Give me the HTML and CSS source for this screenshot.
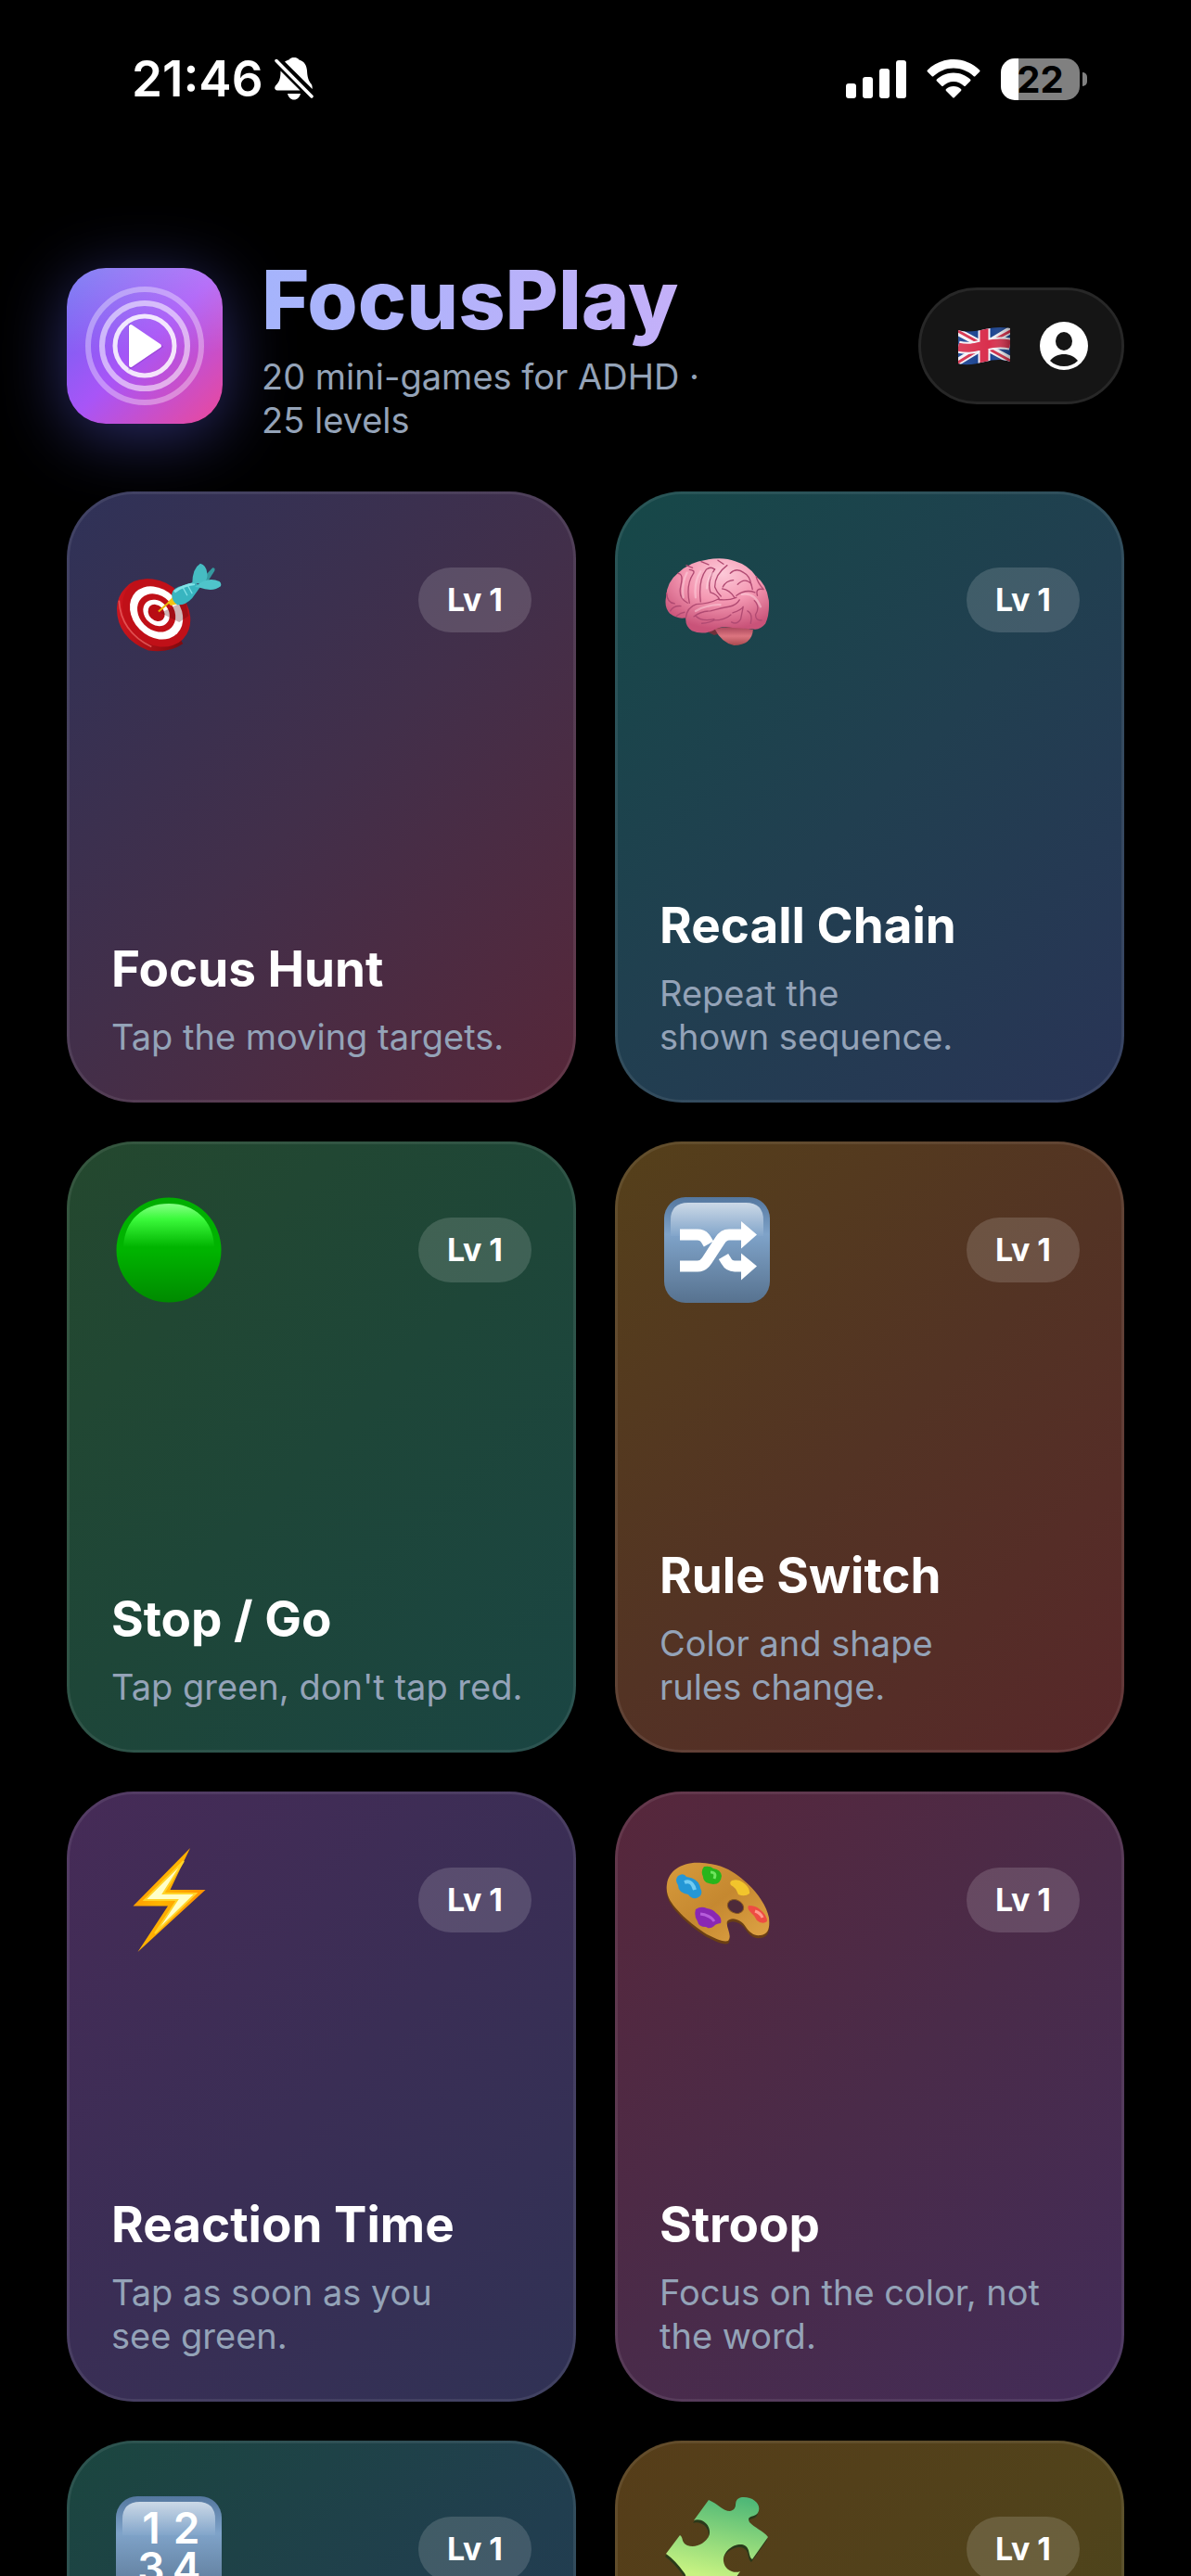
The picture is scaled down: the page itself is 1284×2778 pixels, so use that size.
FILE: index.html
```html
<!DOCTYPE html>
<html lang="en">
<head>
<meta charset="utf-8">
<meta name="viewport" content="width=device-width, initial-scale=1">
<title>FocusPlay</title>
<link rel="stylesheet" href="styles.css">
</head>
<body>
<div class="status">
  <div class="status-group">
    <span class="clock">21:46</span>
    <svg class="bell" viewBox="0 0 42 46" role="img" aria-label="Silent">
      <path fill="#fff" d="M11 4.500C13 3 14 3 15.500 2.500 17 .5 19 0 21 0s4 .5 5.500 2.500C32 4 34.500 8.500 35 14c.3 7 1.500 11 4.500 14.500 1 1.200 1.300 3 1.200 5.500zM6.500 14.500 27.500 35.500H3C0 35.500-.5 32.500 1 30.500 5 26.500 6.500 23 6.500 14.500zM14 39h14c-1 4-3.500 6.500-7 6.500s-6-2.500-7-6.500z"/>
      <path d="M2 3.500 40 42" stroke="#fff" stroke-width="3.500" stroke-linecap="round"/>
    </svg>
  </div>
  <div class="status-group status-right">
    <svg class="signal" viewBox="0 0 65 42" role="img" aria-label="Signal"><g fill="#fff"><rect y="26" width="11" height="16" rx="3"/><rect x="18" y="19" width="11" height="23" rx="3"/><rect x="36" y="10" width="11" height="32" rx="3"/><rect x="54" y="1" width="11" height="41" rx="3"/></g></svg>
    <svg class="wifi" viewBox="0 0 58 42" role="img" aria-label="Wi-Fi"><g fill="#fff"><path d="M29 0C40 0 50 4.500 57 11.500q1 1 0 2L52.500 18q-1 1-2 0C44.500 12.500 37 9.500 29 9.500S13.500 12.500 7.500 18q-1 1-2 0L1 13.500q-1-1 0-2C8 4.500 18 0 29 0z"/><path d="M29 14.500c7 0 13.500 2.800 18 7q1 1 0 2L42 28.500q-1 1-2 0C37 26 33.500 24 29 24s-8 2-11 4.500q-1 1-2 0L11 23.500q-1-1 0-2c4.500-4.200 11-7 18-7z"/><path d="M29 29c3.200 0 6 1.200 8 3q1 1 0 2L30 41q-1 1-2 0L21 34q-1-1 0-2c2-1.800 4.800-3 8-3z"/></g></svg>
    <div class="battery"><span>22</span></div>
  </div>
</div>

<main class="app">
  <header class="header">
    <svg class="logo" viewBox="0 0 168 168" role="img" aria-label="FocusPlay logo">
      <g fill="none" stroke="#fff"><circle cx="84" cy="84" r="61" stroke-width="6" opacity=".35"/><circle cx="84" cy="84" r="46" stroke-width="6" opacity=".55"/><circle cx="84" cy="84" r="32" stroke-width="5" opacity=".85"/></g>
      <path d="M69 64v42l31-21z" fill="#50188c" stroke="#50188c" stroke-width="5" opacity=".2"/>
      <path d="M69 63v42l31-21z" fill="#fff" stroke="#fff" stroke-width="4" stroke-linejoin="round"/>
    </svg>
    <div class="brand">
      <h1>FocusPlay</h1>
      <p>20 mini-games for ADHD · <br>25 levels</p>
    </div>
    <button class="profile" type="button" aria-label="Language and profile">
      <svg class="flag" viewBox="0 0 56 42">
        <defs><clipPath id="wave"><path d="M0 4C10 7 20 5 29 3S46 0 56 2V38C46 35 38 36 29 38S10 43 0 40z"/></clipPath>
        <linearGradient id="fold"><stop offset="0" stop-color="#fff" stop-opacity=".1"/><stop offset=".6" stop-color="#fff" stop-opacity="0"/><stop offset="1" stop-color="#000" stop-opacity=".3"/></linearGradient></defs>
        <g clip-path="url(#wave)">
          <path fill="#17408f" d="M0 0h56v42H0z"/>
          <path d="M-2 5 58 37M-2 39 58 3" stroke="#f4f2f7" stroke-width="8"/>
          <path d="M-2 4 27 20M29 22 58 38M-2 40 27 22M29 20 58 4" stroke="#d42b48" stroke-width="3"/>
          <path d="M28 0v42M0 22C12 25 20 22 29 20S45 17 56 19" stroke="#f4f2f7" stroke-width="13" fill="none"/>
          <path d="M28 0v42M0 22C12 25 20 22 29 20S45 17 56 19" stroke="#d92f4d" stroke-width="9" fill="none"/>
          <path fill="url(#fold)" d="M0 0h56v42H0z"/>
        </g>
      </svg>
      <svg class="user" viewBox="0 0 52 52"><circle cx="26" cy="26" r="26" fill="#fff"/><ellipse cx="26" cy="21" rx="9" ry="10" fill="#151515"/><path d="M11 42C18 32.500 34 32.500 41 42 33 50 19 50 11 42z" fill="#151515"/></svg>
    </button>
  </header>

  <section class="grid" aria-label="Games">
    <a class="card indigo-red" href="#focus-hunt">
      <div class="card-top">
        <svg class="icon" viewBox="0 0 114 114" aria-hidden="true">
          <defs><linearGradient id="rim" x1="0" x2="1"><stop stop-color="#cc1620"/><stop offset=".2" stop-color="#c21219"/><stop offset="1" stop-color="#7d0a0e"/></linearGradient></defs>
          <g transform="translate(-15 -9) scale(.333)">
            <path d="M75 160Q100 128 150 130L262 340Q215 372 150 362 48 320 48 225 50 185 75 160z" fill="url(#rim)"/>
            <path d="M55 200Q60 300 160 350" stroke="#ee6a68" stroke-width="5" fill="none" opacity=".7"/>
            <g transform="translate(176 240) rotate(45)"><ellipse rx="121" ry="98" fill="#c01018"/><ellipse rx="95" ry="76" fill="#fff"/><ellipse rx="68" ry="55" fill="#c01018"/><ellipse rx="47" ry="38" fill="#fff"/><ellipse rx="30" ry="24" fill="#b80d14"/></g>
            <path d="M190 240 270 200 280 250 250 270z" fill="#5c0a10" opacity=".3"/>
            <path d="M183 236 218 205" stroke="#e8b90a" stroke-width="6"/><path d="M212 206 230 188 244 212 222 216z" fill="#f2c413"/>
            <path d="M316 138 358 94q10 0 6 10L335 150z" fill="#35999f"/>
            <path d="M226 178Q230 158 262 152L300 140 318 156 292 192Q270 216 244 214 224 202 226 178z" fill="#38b5c0"/>
            <path d="M234 172Q262 150 300 146" stroke="#82e3e8" stroke-width="9" fill="none"/>
            <path d="M262 158l14 26M278 152l14 26" stroke="#7fe0e6" stroke-width="4"/>
            <path d="M292 146Q292 96 318 80q20 6 22 30 4 18-10 34z" fill="#46bcc2"/><path d="M300 156Q340 120 380 138q8 6 4 16-24 20-70 4z" fill="#4fc4ca"/>
          </g>
        </svg>
        <span class="badge">Lv 1</span>
      </div>
      <div class="card-text"><h2>Focus Hunt</h2><p>Tap the moving targets.</p></div>
    </a>

    <a class="card teal-indigo" href="#recall-chain">
      <div class="card-top">
        <svg class="icon" viewBox="0 0 114 114" aria-hidden="true">
          <defs><radialGradient id="brain" cx=".55" cy=".2" r=".75"><stop stop-color="#fcc9d8"/><stop offset=".5" stop-color="#f498b2"/><stop offset="1" stop-color="#c95379"/></radialGradient><linearGradient id="stem" x2="0" y2="1"><stop stop-color="#a8455a"/><stop offset=".5" stop-color="#dc7580"/><stop offset="1" stop-color="#a94a50"/></linearGradient></defs>
          <g transform="translate(-16 -9) scale(.333)" fill="none" stroke="#b04a72" stroke-width="4" stroke-linecap="round" stroke-linejoin="round">
            <path d="M186 300 225 285 250 300 210 312z" fill="#70303a" stroke="none"/>
            <path d="M212 292q60-14 124 2-4 50-62 51-40-8-62-53z" fill="url(#stem)" stroke="none"/>
            <path d="M54 190Q56 140 92 112 130 74 185 68 240 58 278 73 320 85 346 122 380 146 387 200 390 245 376 275 358 298 332 292L270 288Q235 280 205 298 170 312 138 298 116 284 118 256 92 262 66 242 48 222 54 190z" fill="url(#brain)" stroke="none"/>
            <path d="M118 256q4-34 34-44 44-2 70-16M82 210q-24-2-26-34M92 112q20 0 10 40t22 56M130 208q-12-58 12-94 8-12-12-14M166 204q-8-70 18-104 16-12 28 0M212 98q-26 40-14 76 22 6 30 24M232 186q-14-14-20-30 0-40 40-70M276 190q-16-24-40-28M238 156q10-20 34-22M282 184q30-22 60-10M262 112q20-20 44-2 20 10 24 40M286 148q24-24 44-2l4 18M346 122q4 20 24 42M370 164q-28-6-20 20M222 196q30 6 60-6M292 198q-10 18-34 22t-60 14q-30 0-54 18M170 274q26-2 40-10 34 0 54-18M150 250q20 20 60 10M270 240q30-10 34-20l-8 40q-12 20-30 10M318 234q18 10 10 40M340 200q20 20 4 46 0 20 20 18M68 234q10-18 34-16M88 250q12-10 26-12M120 86l20 8M168 74l24 10M222 70l18 12"/>
            <path d="M110 190q-6-46 12-80M150 190q-6-50 16-84M186 160q4-36 20-48M150 234q40-22 80-20M300 180q40-8 60 40" stroke="#ffdbe5" stroke-width="7" opacity=".45"/>
          </g>
        </svg>
        <span class="badge">Lv 1</span>
      </div>
      <div class="card-text"><h2>Recall Chain</h2><p>Repeat the <br>shown sequence.</p></div>
    </a>

    <a class="card green-teal" href="#stop-go">
      <div class="card-top">
        <svg class="icon" viewBox="0 0 114 114" aria-hidden="true">
          <defs><linearGradient id="g1" x2="0" y2="1"><stop stop-color="#00ae00"/><stop offset=".5" stop-color="#00b400"/><stop offset="1" stop-color="#008a00"/></linearGradient><linearGradient id="g2" x2="0" y2="1"><stop stop-color="#86ff86"/><stop offset=".35" stop-color="#3bfa3b"/><stop offset="1" stop-color="#00b400"/></linearGradient></defs>
          <circle cx="57" cy="57" r="56.500" fill="url(#g1)"/><path d="M8 54C9 25 29 7 57 7s48 18 49 47z" fill="url(#g2)"/>
        </svg>
        <span class="badge">Lv 1</span>
      </div>
      <div class="card-text"><h2>Stop / Go</h2><p>Tap green, don't tap red.</p></div>
    </a>

    <a class="card amber-red" href="#rule-switch">
      <div class="card-top">
        <svg class="icon" viewBox="0 0 114 114" aria-hidden="true">
          <defs><linearGradient id="key" x2="0" y2="1"><stop stop-color="#54779f"/><stop offset=".35" stop-color="#7fa3c9"/><stop offset="1" stop-color="#57728f"/></linearGradient><linearGradient id="gloss" x2="0" y2="1"><stop stop-color="#ccd9e7"/><stop offset="1" stop-color="#82a5ca"/></linearGradient></defs>
          <rect width="114" height="114" rx="23" fill="url(#key)"/><path d="M7 42V25Q7 6 26 6H88Q107 6 107 25V42z" fill="url(#gloss)"/>
          <g fill="none" stroke="#fff" stroke-width="12"><path d="M17 74.500h19q6 0 10-6L60 47q4-6.500 10-6.500h15M17 40.500h19q6 0 9 5l3 5M64 64l3 5q3 5.500 9 5.500h9"/></g><path d="M83 26l17 14.500L83 55.500zM83 60.500l17 14L83 89.500z" fill="#fff"/>
        </svg>
        <span class="badge">Lv 1</span>
      </div>
      <div class="card-text"><h2>Rule Switch</h2><p>Color and shape <br>rules change.</p></div>
    </a>

    <a class="card purple-indigo" href="#reaction-time">
      <div class="card-top">
        <svg class="icon" viewBox="0 0 114 114" aria-hidden="true">
          <defs><linearGradient id="bolt" x2="1" y2=".6"><stop stop-color="#ff8a00"/><stop offset=".5" stop-color="#ffb400"/><stop offset="1" stop-color="#ff8c00"/></linearGradient></defs>
          <path d="M80 1 58.500 46H96.500L23.500 113 56 63.500H18.500z" fill="url(#bolt)"/><path d="M73 15 51 50H86L42 93 66 57H31z" fill="#ffffc8" stroke="#ffd428" stroke-width="2"/>
        </svg>
        <span class="badge">Lv 1</span>
      </div>
      <div class="card-text"><h2>Reaction Time</h2><p>Tap as soon as you <br>see green.</p></div>
    </a>

    <a class="card rose-purple" href="#stroop">
      <div class="card-top">
        <svg class="icon" viewBox="0 0 114 114" aria-hidden="true">
          <defs><linearGradient id="wood" x2="1" y2="1"><stop stop-color="#d79b3c"/><stop offset=".5" stop-color="#c58830"/><stop offset="1" stop-color="#e0a546"/></linearGradient></defs>
          <path transform="translate(0 3)" d="M3 40C5 25 20 15 41 17 58 18 70 23 80 31 95 42 110 60 113 76 114 86 113 94 104 95 97 96 92 92 88 86 84 79 73 74 68 80 66 86 74 95 69 101 64 103 54 98 46 94 30 84 8 65 4 52Q2 46 3 40z" fill="#6b3f14"/>
          <path d="M3 40C5 25 20 15 41 17 58 18 70 23 80 31 95 42 110 60 113 76 114 86 113 94 104 95 97 96 92 92 88 86 84 79 73 74 68 80 66 86 74 95 69 101 64 103 54 98 46 94 30 84 8 65 4 52Q2 46 3 40z" fill="url(#wood)"/>
          <ellipse cx="77" cy="64" rx="9" ry="7" transform="rotate(25 77 64)" fill="#4d2a3a" stroke="#8a5a20" stroke-width="1"/>
          <path d="M15 31q6-4 9 1 14 2 15 12 4 8-4 11-6 1-9-4-11-2-11-10-4-6 0-10z" fill="#2497d6"/><path d="M22 38q8-3 11 8" stroke="#71ccf2" stroke-width="4" fill="none"/>
          <path d="M43 21q7-1 10 2 8 1 9 8-1 9-9 9-11-1-11-8-3-6 1-11z" fill="#27b51b"/><path d="M50 27q7 0 4 7" stroke="#6ee45e" stroke-width="3" fill="none"/>
          <path d="M73 36q7-2 12 2 8 6 7 12-5 4-12 1-3-8-8-10-2-3 1-5z" fill="#f2c52c"/>
          <path d="M91 63q8 0 12 4 8 6 8 13-5 4-11-1-3-6-7-9-4-4-2-7z" fill="#ee4c43"/><path d="M98 69q6 2 8 7" stroke="#ff9a8d" stroke-width="3" fill="none"/>
          <path d="M34 67q6-4 12-1 7 1 10 5 7 5 5 11-6 1-7 3-5 4-9 1-8 0-9-6-4-5-2-13z" fill="#8a27b4"/><path d="M39 72q10 1 15 8" stroke="#b65cdb" stroke-width="3" fill="none"/>
        </svg>
        <span class="badge">Lv 1</span>
      </div>
      <div class="card-text"><h2>Stroop</h2><p>Focus on the color, not the word.</p></div>
    </a>

    <a class="card teal-blue" href="#numbers">
      <div class="card-top">
        <svg class="icon" viewBox="0 0 114 114" aria-hidden="true">
          <rect width="114" height="114" rx="23" fill="url(#key)"/><path d="M7 42V25Q7 6 26 6H88Q107 6 107 25V42z" fill="url(#gloss)"/>
          <g class="digits"><text x="38" y="51">1</text><text x="76" y="51">2</text><text x="38" y="94">3</text><text x="76" y="94">4</text></g>
        </svg>
        <span class="badge">Lv 1</span>
      </div>
    </a>

    <a class="card amber-olive" href="#puzzle">
      <div class="card-top">
        <svg class="icon" viewBox="0 0 114 114" aria-hidden="true">
          <defs><linearGradient id="puz" x1=".6" x2=".4" y2="1"><stop stop-color="#50b877"/><stop offset=".45" stop-color="#93da7c"/><stop offset=".8" stop-color="#c8f382"/></linearGradient></defs>
          <path transform="translate(-1 3)" d="M2 62 17 42C21 44 18 50 25 53 36 57 48 48 49 40 50 30 40 23 32 26L48 4C58 8 63 16 71 16 82 14 72 3 84 1 96 0 106 9 101 18 98 23 88 20 92 28 97 34 107 37 112 44L95 68C90 65 94 54 84 52 74 51 63 60 64 70 65 79 75 84 82 81L65 106C50 99 48 94 42 99 40 112 20 112 17 99 17 91 27 91 22 83Q12 69 2 62z" fill="#2a3a1a"/>
          <path d="M2 62 17 42C21 44 18 50 25 53 36 57 48 48 49 40 50 30 40 23 32 26L48 4C58 8 63 16 71 16 82 14 72 3 84 1 96 0 106 9 101 18 98 23 88 20 92 28 97 34 107 37 112 44L95 68C90 65 94 54 84 52 74 51 63 60 64 70 65 79 75 84 82 81L65 106C50 99 48 94 42 99 40 112 20 112 17 99 17 91 27 91 22 83Q12 69 2 62z" fill="url(#puz)"/>
        </svg>
        <span class="badge">Lv 1</span>
      </div>
    </a>
  </section>
</main>
</body>
</html>
```
FILE: styles.css
```css
* { box-sizing: border-box; }

html, body { height: 100%; }

body {
  margin: 0;
  background: #000;
  color: #fff;
  font-family: Inter, "Liberation Sans", sans-serif;
  overflow: hidden;
}

h1, h2, p { margin: 0; }

/* Status bar */
.status {
  display: flex;
  justify-content: space-between;
  align-items: center;
  padding: 53px 112px 0 142px;
}
.status-group { display: flex; align-items: center; gap: 12px; }
.status-right { gap: 22px; }
.clock { font-size: 53px; line-height: 64px; font-weight: 600; }
.bell { width: 42px; height: 46px; }
.signal { width: 65px; height: 42px; }
.wifi { width: 58px; height: 42px; }
.battery {
  position: relative;
  width: 85px;
  height: 45px;
  margin-right: 8px;
  border-radius: 15px;
  background: linear-gradient(90deg, #fff 19px, #808080 19px);
  color: #000;
  font-size: 40px;
  line-height: 45px;
  font-weight: 700;
  text-align: center;
}
.battery::after {
  content: "";
  position: absolute;
  left: 88px;
  top: 15px;
  width: 5px;
  height: 15px;
  border-radius: 0 6px 6px 0;
  background: #808080;
}

/* Header */
.app { padding: 152px 72px 0; }
.header { display: flex; align-items: center; gap: 42px; }
.logo {
  flex: none;
  width: 168px;
  height: 168px;
  border-radius: 42px;
  background:
    linear-gradient(180deg, rgba(255, 255, 255, .2), rgba(255, 255, 255, 0) 55%),
    linear-gradient(135deg, #6366f1, #a855f7 50%, #ec4899);
  box-shadow: 0 12px 72px rgba(99, 102, 241, .45);
}
.brand { flex: 1; min-width: 0; }
.brand h1 {
  width: max-content;
  font-size: 88px;
  line-height: 108px;
  font-weight: 800;
  background: linear-gradient(90deg, #a5b4fc, #c4b0f9);
  -webkit-background-clip: text;
  background-clip: text;
  color: transparent;
}
.brand p {
  padding-top: 6px;
  color: #94a3b8;
  font-size: 38px;
  line-height: 47px;
}
.profile {
  flex: none;
  display: flex;
  align-items: center;
  gap: 32px;
  height: 126px;
  padding: 0 36px 0 40px;
  border: 3px solid #272727;
  border-radius: 63px;
  background: #151515;
}
.flag { width: 56px; height: 42px; }
.user { width: 52px; height: 52px; }

/* Game cards */
.grid {
  display: grid;
  grid-template-columns: 1fr 1fr;
  gap: 42px;
  padding-top: 53px;
}
.card {
  display: flex;
  flex-direction: column;
  justify-content: space-between;
  aspect-ratio: 5 / 6;
  padding: 45px 45px 44px;
  border: 3px solid rgba(255, 255, 255, .08);
  border-radius: 72px;
  background-origin: border-box;
  color: #fff;
  text-decoration: none;
}
.card-top {
  display: flex;
  align-items: center;
  justify-content: space-between;
  height: 138px;
}
.icon { width: 114px; height: 114px; margin-left: 5px; }
.badge {
  padding: 0 31px;
  border-radius: 35px;
  background: rgba(255, 255, 255, .15);
  font-size: 34px;
  line-height: 70px;
  font-weight: 700;
}
.digits { fill: #fff; font-size: 46px; font-weight: 600; text-anchor: middle; }
.card h2 { font-size: 53px; line-height: 62px; font-weight: 700; }
.card p {
  padding-top: 19px;
  color: #94a3b8;
  font-size: 38px;
  line-height: 47px;
}

.indigo-red { background-image: linear-gradient(135deg, #2f3258, #422f4a 50%, #572739); }
.teal-indigo { background-image: linear-gradient(135deg, #164848, #213f50 50%, #293456); }
.green-teal { background-image: linear-gradient(135deg, #24482e, #1e4638 50%, #1a4543); }
.amber-red { background-image: linear-gradient(135deg, #55401a, #533324 50%, #57272a); }
.purple-indigo { background-image: linear-gradient(135deg, #462b57, #3a2e55 50%, #303255); }
.rose-purple { background-image: linear-gradient(135deg, #57273b, #4a2b49 50%, #422c58); }
.teal-blue { background-image: linear-gradient(135deg, #1b463f, #213e4f 50%, #263856); }
.amber-olive { background-image: linear-gradient(135deg, #563d19, #50431b 50%, #40481f); }
```
